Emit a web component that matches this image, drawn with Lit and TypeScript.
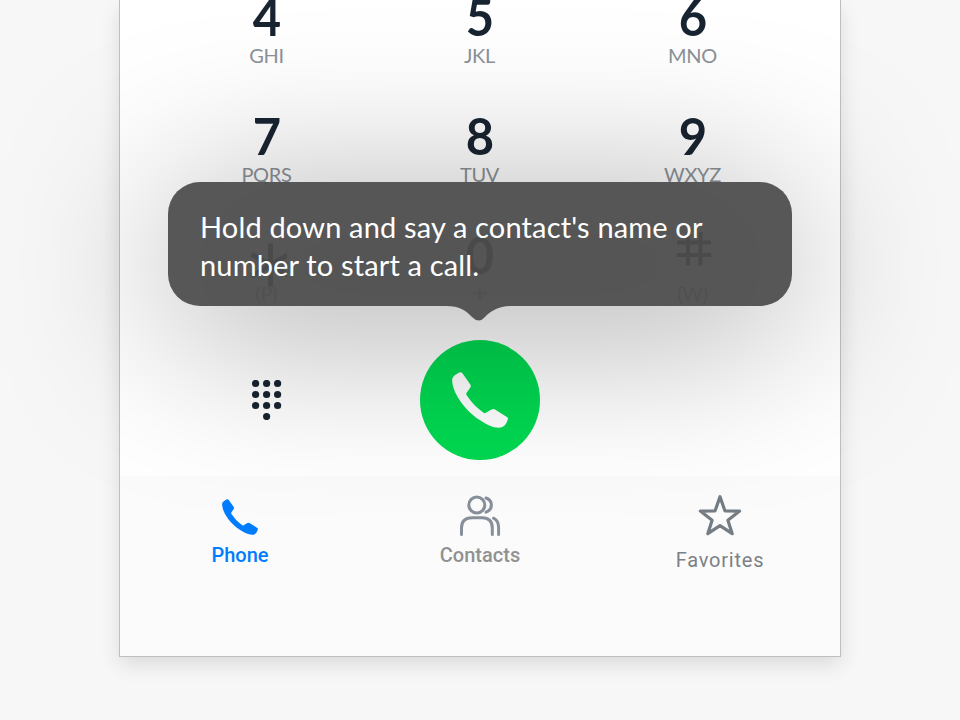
import { LitElement, html, css, svg } from "lit";
import { customElement } from "lit/decorators.js";

const HANDSET =
  "M8.5 .2Q9.6 .2 10.2 1.1L18.3 12.6Q19.2 14 18.5 15.2L14.3 21.2Q13.9 22 14.5 22.9C19.4 30.3 25 36 31.6 40.8Q32.6 41.5 33.8 40.8L39.5 37.5Q41.2 36.6 42.6 37.3L54.9 45Q56.4 46 55.8 47.5C53.9 53.2 51.6 55.7 46.5 55.7C41.2 55.7 34 52.2 26.5 47.2C12.5 37.8 .3 20.3 .2 8.7C.1 4.7 2.5 3.5 6.7 .8Q7.7 .2 8.5 .2Z";

const KEYS = [
  ["4", "GHI"], ["5", "JKL"], ["6", "MNO"],
  ["7", "PQRS"], ["8", "TUV"], ["9", "WXYZ"],
  ["*", "(P)"], ["0", "+"], ["#", "(W)"],
];

@customElement("dial-key")
class DialKey extends LitElement {
  static properties = { digit: {}, letters: {} };
  declare digit: string;
  declare letters: string;
  static styles = css`
    :host { display: flex; flex-direction: column; align-items: center; height: 119px; }
    .digit { font: 700 51.5px/60px Lato, sans-serif; height: 60px; color: #182431; transform: scaleX(.95); margin-top: -1px; }
    .mark { height: 59px; }
    .mark svg { display: block; }
    .letters { font: 400 20px/24px Lato, sans-serif; color: #8b9198; margin-top: -3px; letter-spacing: -.3px; }
    .plus { font: 400 28px/24px "Liberation Sans", sans-serif; }
  `;
  render() {
    let face = html`<div class="digit">${this.digit}</div>`;
    if (this.digit === "*")
      face = html`<div class="mark"><svg width="40" height="62" viewBox="0 0 40 62" fill="none" stroke="#182431" stroke-width="5">
        <path d="M23.5 18.5V61.5M4.5 29L23.5 40L42.5 29M4.5 51L23.5 40L42.5 51" /></svg></div>`;
    if (this.digit === "#")
      face = html`<div class="mark"><svg width="36" height="60" viewBox="0 0 36 60" fill="none" stroke="#182431" stroke-width="4">
        <path d="M13 7V40.5M25.5 7V40.5M2 17.5H36M2 30H36" /></svg></div>`;
    return html`${face}<div class="letters ${this.letters === "+" ? "plus" : ""}">${this.letters}</div>`;
  }
}

@customElement("voice-tip")
class VoiceTip extends LitElement {
  static styles = css`
    :host { display: block; width: 624px; height: 124px; }
    .glow { position: absolute; left: 0; top: 20px; width: 624px; height: 124px; border-radius: 32px;
      background: rgba(0, 0, 0, .37); filter: blur(86px); }
    .bubble { position: relative; box-sizing: border-box; height: 124px; border-radius: 32px;
      padding: 26px 32px; background: rgba(78, 78, 78, .94); color: #fff;
      font: 400 29px/38px Lato, sans-serif; letter-spacing: .16px; }
    .line { display: block; white-space: nowrap; }
    .tail { position: absolute; top: 124px; left: 278px; }
  `;
  render() {
    return html`<div class="glow"></div>
      <div class="bubble">
        <span class="line">Hold down and say a contact's name or</span>
        <span class="line">number to start a call.</span>
        <svg class="tail" width="66" height="16" viewBox="0 0 66 16" fill="rgba(78,78,78,.94)">
          <path d="M0 0C14 0 19 4 26 11Q33 18 39 11C46 4 53 0 66 0Z" />
        </svg>
      </div>`;
  }
}

@customElement("app-root")
class AppRoot extends LitElement {
  static styles = css`
    :host { display: flex; justify-content: center; position: relative; width: 960px; height: 720px;
      overflow: hidden; background: #f7f7f7; }
    .screen { box-sizing: border-box; width: 722px; height: 657px; display: flex; flex-direction: column;
      background: #fff; border: 1px solid #bfbfbf; border-top: 0; box-shadow: 0 8px 20px -1px rgba(0, 0, 0, .12); }
    .keypad { display: grid; grid-template-columns: repeat(3, 213px); justify-content: center; margin-top: -13px; height: 353px; padding-right: 1px; }
    .actions { display: grid; grid-template-columns: repeat(3, 213px); justify-content: center; align-items: center;
      justify-items: center; height: 120px; flex: none; }
    .call { width: 120px; height: 120px; border-radius: 50%; background: #00d951; display: grid; place-items: center; }
    .tabs { display: grid; grid-template-columns: repeat(3, 240px); margin-top: 16px; flex: 1; background: #fbfbfb; }
    .tab { display: flex; flex-direction: column; align-items: center; padding-top: 17px; color: #919191;
      font: 500 20px/24px Roboto, sans-serif; }
    .tab svg { display: block; height: 46px; }
    .tab span { margin-top: 4px; }
    .tab.active { color: #007dff; }
    .tab .favorites { font-weight: 400; letter-spacing: .8px; color: #7b8187; margin-top: 9px; }
    voice-tip { position: absolute; left: 168px; top: 182px; }
  `;
  render() {
    const dots = [0, 1, 2, 3, 4, 5, 6, 7, 8, 10];
    return html`
      <main class="screen">
        <section class="keypad">
          ${KEYS.map(([d, l]) => html`<dial-key .digit=${d} .letters=${l}></dial-key>`)}
        </section>
        <section class="actions">
          <svg width="30" height="40" viewBox="0 0 30 40" fill="#182431">
            ${dots.map((i) => svg`<circle cx=${3.6 + (i % 3) * 11} cy=${3.5 + Math.floor(i / 3) * 11} r="3.6" />`)}
          </svg>
          <div class="call">
            <svg width="56" height="56" viewBox="0 0 56 56" fill="#fff"><path d=${HANDSET} /></svg>
          </div>
        </section>
        <nav class="tabs">
          <div class="tab active">
            <svg width="46" height="46" viewBox="0 0 46 46" fill="currentColor"><path transform="translate(5 6) scale(.643)" d=${HANDSET} /></svg>
            <span>Phone</span>
          </div>
          <div class="tab">
            <svg width="46" height="46" viewBox="457 493 46 46" fill="none" stroke="#87909a" stroke-width="3" stroke-linecap="round">
              <circle cx="476.8" cy="505" r="8" />
              <path d="M486 498C493.2 500.5 493.2 509.5 486 512.2" />
              <path d="M461.5 534.5V528Q461.5 517.7 472 517.7H482Q492.3 517.7 492.3 528V534.5" />
              <path d="M493.5 518.2Q498.6 520.5 498.6 528V534.5" />
            </svg>
            <span>Contacts</span>
          </div>
          <div class="tab">
            <svg width="46" height="46" viewBox="697 493 46 46" fill="none" stroke="#757d84" stroke-width="3.2" stroke-linejoin="round">
              <path d="M720 496.7L724.9 510.8L739.6 511.1L727.9 520.2L732.2 533.7L720 525.7L707.8 533.7L712.1 520.2L700.4 511.1L715.1 510.8Z" />
            </svg>
            <span class="favorites">Favorites</span>
          </div>
        </nav>
      </main>
      <voice-tip></voice-tip>
    `;
  }
}
